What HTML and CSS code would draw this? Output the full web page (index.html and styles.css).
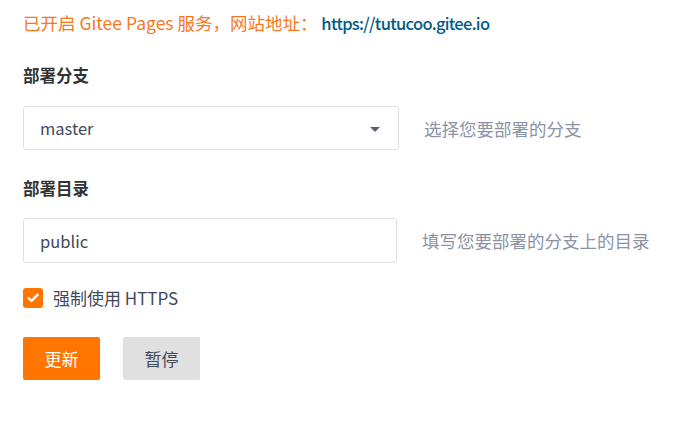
FILE: index.html
```html
<!DOCTYPE html>
<html lang="zh-CN">
<head>
<meta charset="utf-8">
<title>Gitee Pages</title>
<link rel="stylesheet" href="styles.css">
</head>
<body>
<div class="page">
  <div class="notice">已开启 Gitee Pages 服务，网站地址： <a class="site" href="#">https://tutucoo.gitee.io</a></div>

  <div class="field">
    <div class="label">部署分支</div>
    <div class="row">
      <div class="control select">
        <span>master</span>
        <svg class="caret" width="10" height="6" viewBox="0 0 10 6"><path d="M0 0 L10 0 L5 5 Z" fill="#5c6170"/></svg>
      </div>
      <div class="help">选择您要部署的分支</div>
    </div>
  </div>

  <div class="field">
    <div class="label">部署目录</div>
    <div class="row">
      <div class="control input">public</div>
      <div class="help">填写您要部署的分支上的目录</div>
    </div>
  </div>

  <label class="check">
    <span class="box"><svg width="12" height="10" viewBox="0 0 12 10"><path d="M1.5 5 L4.5 8 L10.5 1.8" fill="none" stroke="#fff" stroke-width="2.4" stroke-linecap="round" stroke-linejoin="round"/></svg></span>
    <span>强制使用 HTTPS</span>
  </label>

  <div class="actions">
    <button class="btn primary">更新</button>
    <button class="btn">暂停</button>
  </div>
</div>
</body>
</html>
```
FILE: styles.css
```css
* { box-sizing: border-box; }
body {
  margin: 0;
  background: #fff;
  font-family: "Noto Sans CJK SC", "Noto Sans", sans-serif;
  color: #333;
}
.page {
  padding: 9px 23px 0 23px;
}
.notice {
  font-size: 17.5px;
  line-height: 28px;
  color: #f5781e;
}
.site {
  color: #005b85;
  text-decoration: none;
  font-size: 16.5px;
  font-weight: 500;
  letter-spacing: -0.7px;
}
.label {
  font-size: 16.5px;
  font-weight: bold;
  color: #333;
  line-height: 24px;
  margin-top: 26px;
}
.row {
  display: flex;
  align-items: center;
  margin-top: 19px;
}
.control {
  border: 1px solid #dee1e8;
  border-radius: 3px;
  font-size: 16.5px;
  color: #40485b;
  padding: 0 16px;
  display: flex;
  align-items: center;
}
.select {
  width: 376px;
  height: 44px;
  justify-content: space-between;
}
.caret { margin-right: 2px; margin-top: 3px; }
.input {
  width: 374px;
  height: 45px;
}
.field + .field .row { margin-top: 18px; }
.help {
  margin-left: 25px;
  font-size: 17.5px;
  color: #8c93a5;
}
.check {
  display: flex;
  align-items: center;
  margin-top: 22px;
  font-size: 17px;
  color: #40485b;
}
.box {
  width: 20px;
  height: 20px;
  border-radius: 3px;
  background: #ff7500;
  display: flex;
  align-items: center;
  justify-content: center;
  margin-right: 10px;
}
.actions {
  display: flex;
  gap: 23px;
  margin-top: 27px;
}
.btn {
  width: 77px;
  height: 43px;
  border: none;
  border-radius: 2px;
  background: #e0e0e0;
  color: #40485b;
  font-family: inherit;
  font-size: 17px;
  padding: 0;
}
.btn.primary {
  background: #ff7500;
  color: #fff;
}
```
